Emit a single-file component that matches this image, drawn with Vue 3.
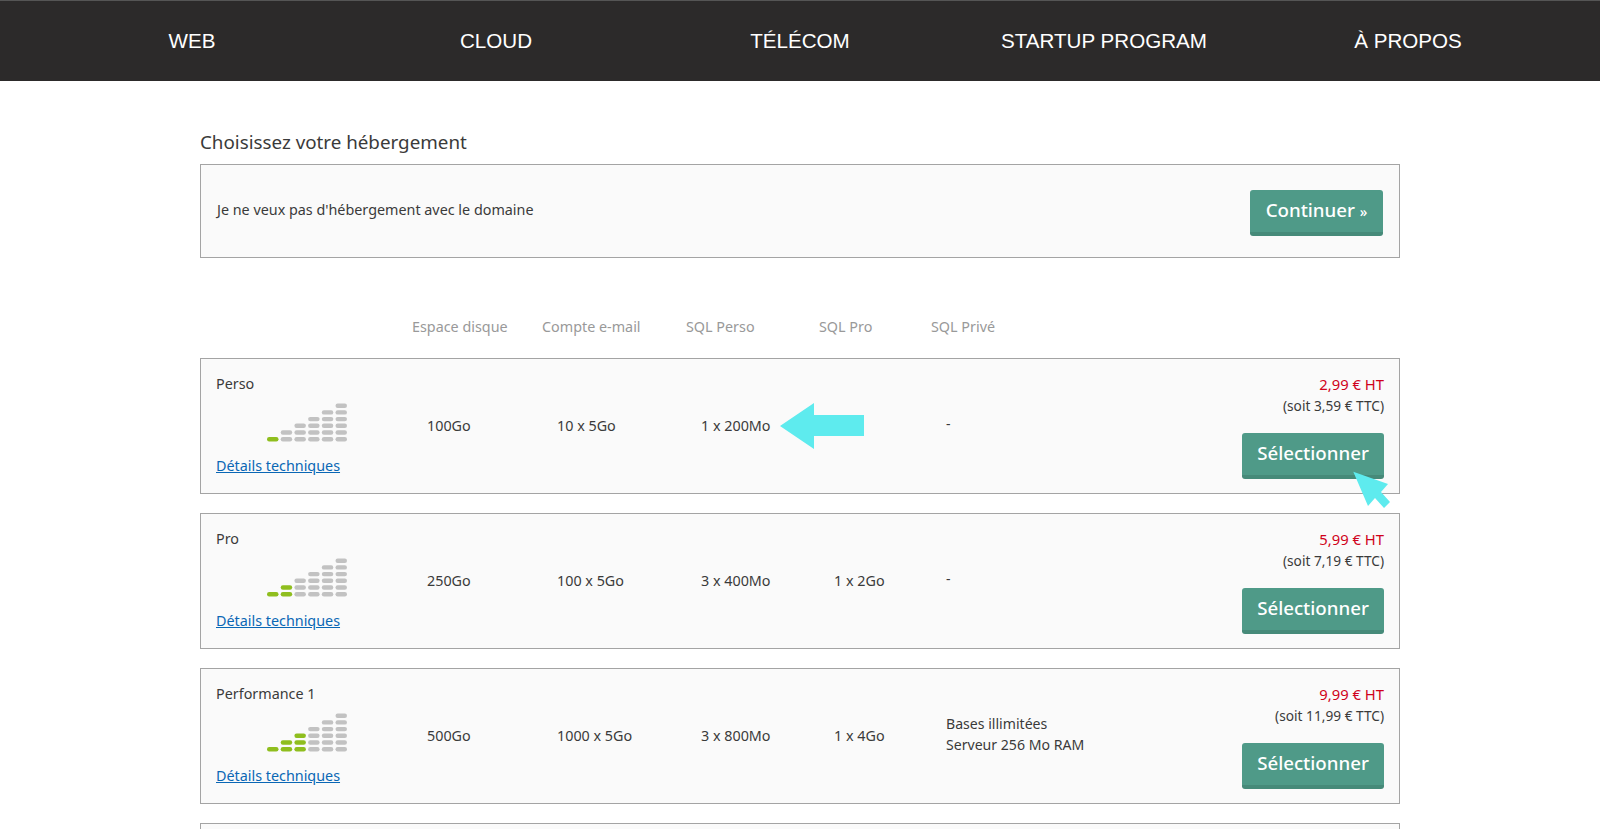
<script setup>
const nav = ['WEB', 'CLOUD', 'TÉLÉCOM', 'STARTUP PROGRAM', 'À PROPOS']
const heads = ['Espace disque', 'Compte e-mail', 'SQL Perso', 'SQL Pro', 'SQL Privé']
const plans = [
  { name: 'Perso', level: 1, disk: '100Go', mail: '10 x 5Go', sql: '1 x 200Mo', pro: '', priv: ['-'], ht: '2,99 € HT', ttc: '(soit 3,59 € TTC)' },
  { name: 'Pro', level: 2, disk: '250Go', mail: '100 x 5Go', sql: '3 x 400Mo', pro: '1 x 2Go', priv: ['-'], ht: '5,99 € HT', ttc: '(soit 7,19 € TTC)' },
  { name: 'Performance 1', level: 3, disk: '500Go', mail: '1000 x 5Go', sql: '3 x 800Mo', pro: '1 x 4Go', priv: ['Bases illimitées', 'Serveur 256 Mo RAM'], ht: '9,99 € HT', ttc: '(soit 11,99 € TTC)' }
]
const bars = []
for (let c = 0; c < 6; c++) {
  for (let r = 0; r <= c; r++) bars.push({ c, r, x: c * 13.7, y: 35 - r * 6.7 })
}
</script>

<template>
  <div class="page">
    <nav class="nav">
      <a v-for="n in nav" :key="n" class="nav-item">{{ n }}</a>
    </nav>
    <main class="main">
      <h2 class="title">Choisissez votre hébergement</h2>
      <section class="box none">
        <span class="none-text">Je ne veux pas d'hébergement avec le domaine</span>
        <button class="btn cont">Continuer <small>»</small></button>
      </section>
      <div class="grid heads">
        <span></span>
        <span v-for="h in heads" :key="h">{{ h }}</span>
      </div>
      <section v-for="p in plans" :key="p.name" class="box grid plan">
        <div class="info">
          <div class="name">{{ p.name }}</div>
          <svg class="bars" width="81" height="40" viewBox="0 0 81 40">
            <rect v-for="b in bars" :key="b.c + '-' + b.r" :x="b.x" :y="b.y" width="11.5" height="4.4" rx="2.2"
              :fill="b.c < p.level ? '#8fbe1e' : '#c2c2c2'" />
          </svg>
          <a class="link">Détails techniques</a>
        </div>
        <span class="val">{{ p.disk }}</span>
        <span class="val">{{ p.mail }}</span>
        <span class="val">{{ p.sql }}</span>
        <span class="val">{{ p.pro }}</span>
        <div class="val priv"><div v-for="l in p.priv" :key="l">{{ l }}</div></div>
        <div class="buy">
          <div class="ht">{{ p.ht }}</div>
          <div class="ttc">{{ p.ttc }}</div>
          <button class="btn sel">Sélectionner</button>
        </div>
      </section>
      <section class="box plan stub"></section>
    </main>
    <svg class="arrow" width="86" height="46" viewBox="0 0 86 46"><path d="M0 23 L34 0 V12 H84 V33 H34 V46 Z" fill="#5eebee"/></svg>
    <svg class="cursor" width="40" height="40" viewBox="0 0 40 40"><path d="M1.3 1.7 L36 14 L29 22 L38 32 L32 38 L23 28 L16 36 Z" fill="#5eebee"/></svg>
  </div>
</template>

<style>
html, body { margin: 0; background: #fff; overflow: hidden; }
</style>

<style scoped>
.page { position: relative; height: 829px; overflow: hidden; font-family: "Noto Sans", sans-serif; font-size: 14.35px; color: #3a3a3a; }
.nav { display: flex; box-sizing: border-box; height: 81px; padding: 0 40px; background: #2c2a2a; border-top: 1px solid #555; }
.nav-item { flex: 1 1 0; text-align: center; color: #fff; font: 20.6px/80px "Liberation Sans", sans-serif; }
.main { width: 1200px; margin: 0 auto; }
.title { margin: 48px 0 9px; font-size: 18.8px; font-weight: 400; line-height: 26px; color: #3a3a3a; }
.box { box-sizing: border-box; border: 1px solid #a4a4a4; background: #fafafa; }
.none { display: flex; justify-content: space-between; align-items: center; height: 94px; padding: 0 16px; }
.none-text { margin-bottom: 4px; }
.grid { display: grid; grid-template-columns: 212px 130px 144px 133px 112px 1fr; }
.heads { margin-top: 57px; height: 24px; line-height: 24px; color: #999; margin-bottom: 19px; }
.plan { height: 136px; margin-bottom: 19px; align-items: center; }
.plan.grid { grid-template-columns: 211px 130px 144px 133px 112px 1fr auto; }
.info { position: relative; height: 134px; }
.name { position: absolute; top: 15px; left: 15px; line-height: 20px; }
.bars { position: absolute; left: 66px; top: 43px; }
.link { position: absolute; left: 15px; top: 97px; line-height: 20px; color: #0a67b5; text-decoration: underline; }
.val { padding-left: 15px; padding-bottom: 2px; white-space: nowrap; }
.priv { padding-bottom: 4px; line-height: 21.5px; font-size: 14.1px; }
.buy { grid-column: 7; display: flex; flex-direction: column; align-items: flex-end; padding: 14px 15px 0 0; height: 134px; box-sizing: border-box; }
.ht { color: #d0021b; line-height: 22px; font-size: 14.8px; }
.ttc { line-height: 22px; font-size: 13.7px; }
.btn { box-sizing: border-box; height: 46px; border: 0; border-bottom: 4px solid #468a79; border-radius: 3px; background: #4f9a88; color: #fff; font: 500 18.7px "Noto Sans", sans-serif; padding: 0 0 4px; white-space: nowrap; }
.btn small { font-size: 14px; }
.sel { margin-top: 16px; width: 142px; }
.cont { width: 133px; margin-top: 4px; }
.stub { margin: 0; }
.arrow { position: absolute; left: 780px; top: 403px; }
.cursor { position: absolute; left: 1352px; top: 470px; }
</style>
